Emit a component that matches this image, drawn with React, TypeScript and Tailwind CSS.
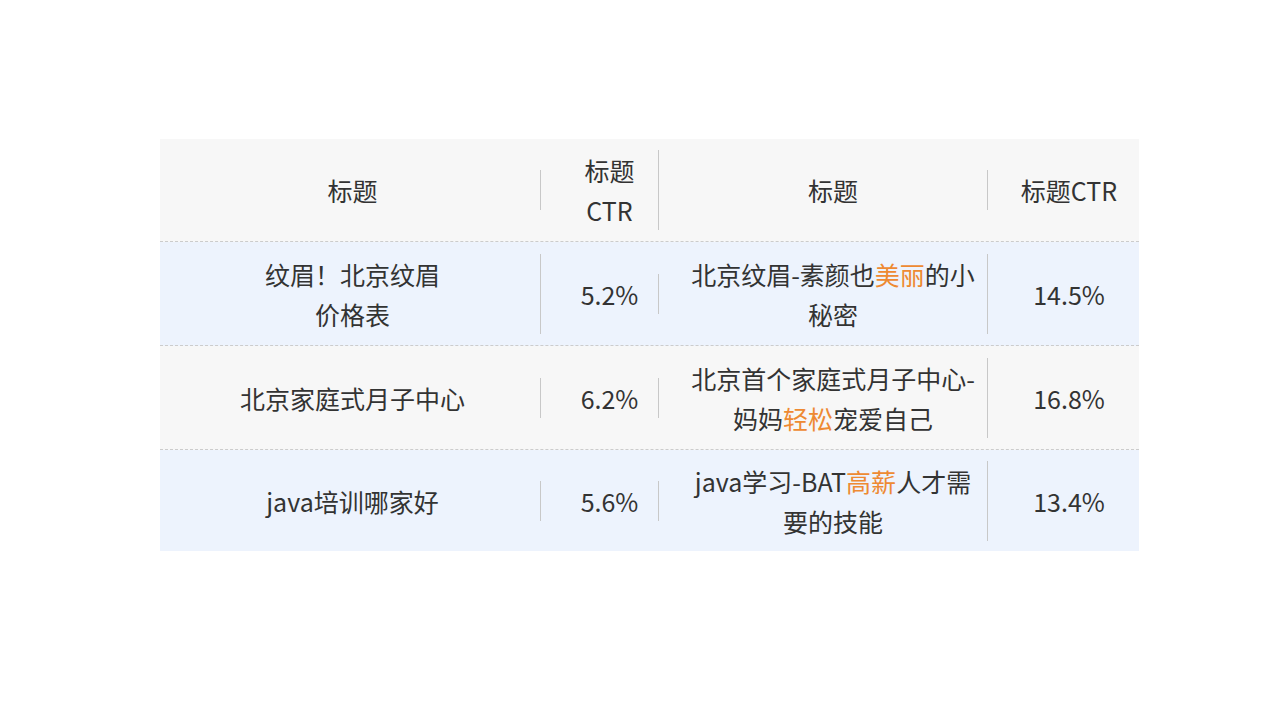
import React from "react";

const O = ({ children }: { children: React.ReactNode }) => (
  <span className="text-[#ee8a33]">{children}</span>
);

type Row = {
  bg: string;
  h: string;
  cells: React.ReactNode[];
  last?: boolean;
};

const widths = ["w-[396px]", "w-[118px]", "w-[329px]", "w-[136px]"];

function Cell({ i, children }: { i: number; children: React.ReactNode }) {
  return (
    <div className={`${widths[i]} flex items-center pl-[5px] ${i === 3 ? "pr-[9px]" : "pr-[15px]"}`}>
      <div
        className={`w-full text-center leading-[40px] ${i === 3 ? "" : "border-r border-[#c8c8c8]"}`}
      >
        {children}
      </div>
    </div>
  );
}

export default function App() {
  const rows: Row[] = [
    {
      bg: "bg-[#f7f7f7]",
      h: "h-[103px]",
      cells: [
        "标题",
        <>
          标题
          <br />
          CTR
        </>,
        "标题",
        "标题CTR",
      ],
    },
    {
      bg: "bg-[#edf3fd]",
      h: "h-[104px]",
      cells: [
        <>
          纹眉！北京纹眉
          <br />
          价格表
        </>,
        "5.2%",
        <>
          北京纹眉-素颜也<O>美丽</O>的小
          <br />
          秘密
        </>,
        "14.5%",
      ],
    },
    {
      bg: "bg-[#f7f7f7]",
      h: "h-[104px]",
      cells: [
        "北京家庭式月子中心",
        "6.2%",
        <>
          北京首个家庭式月子中心-
          <br />
          妈妈<O>轻松</O>宠爱自己
        </>,
        "16.8%",
      ],
    },
    {
      bg: "bg-[#edf3fd]",
      h: "h-[101px]",
      last: true,
      cells: [
        "java培训哪家好",
        "5.6%",
        <>
          java学习-BAT<O>高薪</O>人才需
          <br />
          要的技能
        </>,
        "13.4%",
      ],
    },
  ];

  return (
    <div
      className="w-[1280px] h-[720px] bg-white pt-[139px] pl-[160px]"
      style={{ fontFamily: '"Noto Sans CJK SC", "Noto Sans", sans-serif' }}
    >
      <div className="w-[979px] text-[25px] text-[#333333]">
        {rows.map((r, ri) => (
          <div
            key={ri}
            className={`flex ${r.bg} ${r.h} ${
              r.last ? "" : "border-b border-dashed border-[#cccccc]"
            }`}
          >
            {r.cells.map((c, ci) => (
              <Cell key={ci} i={ci}>
                {c}
              </Cell>
            ))}
          </div>
        ))}
      </div>
    </div>
  );
}
